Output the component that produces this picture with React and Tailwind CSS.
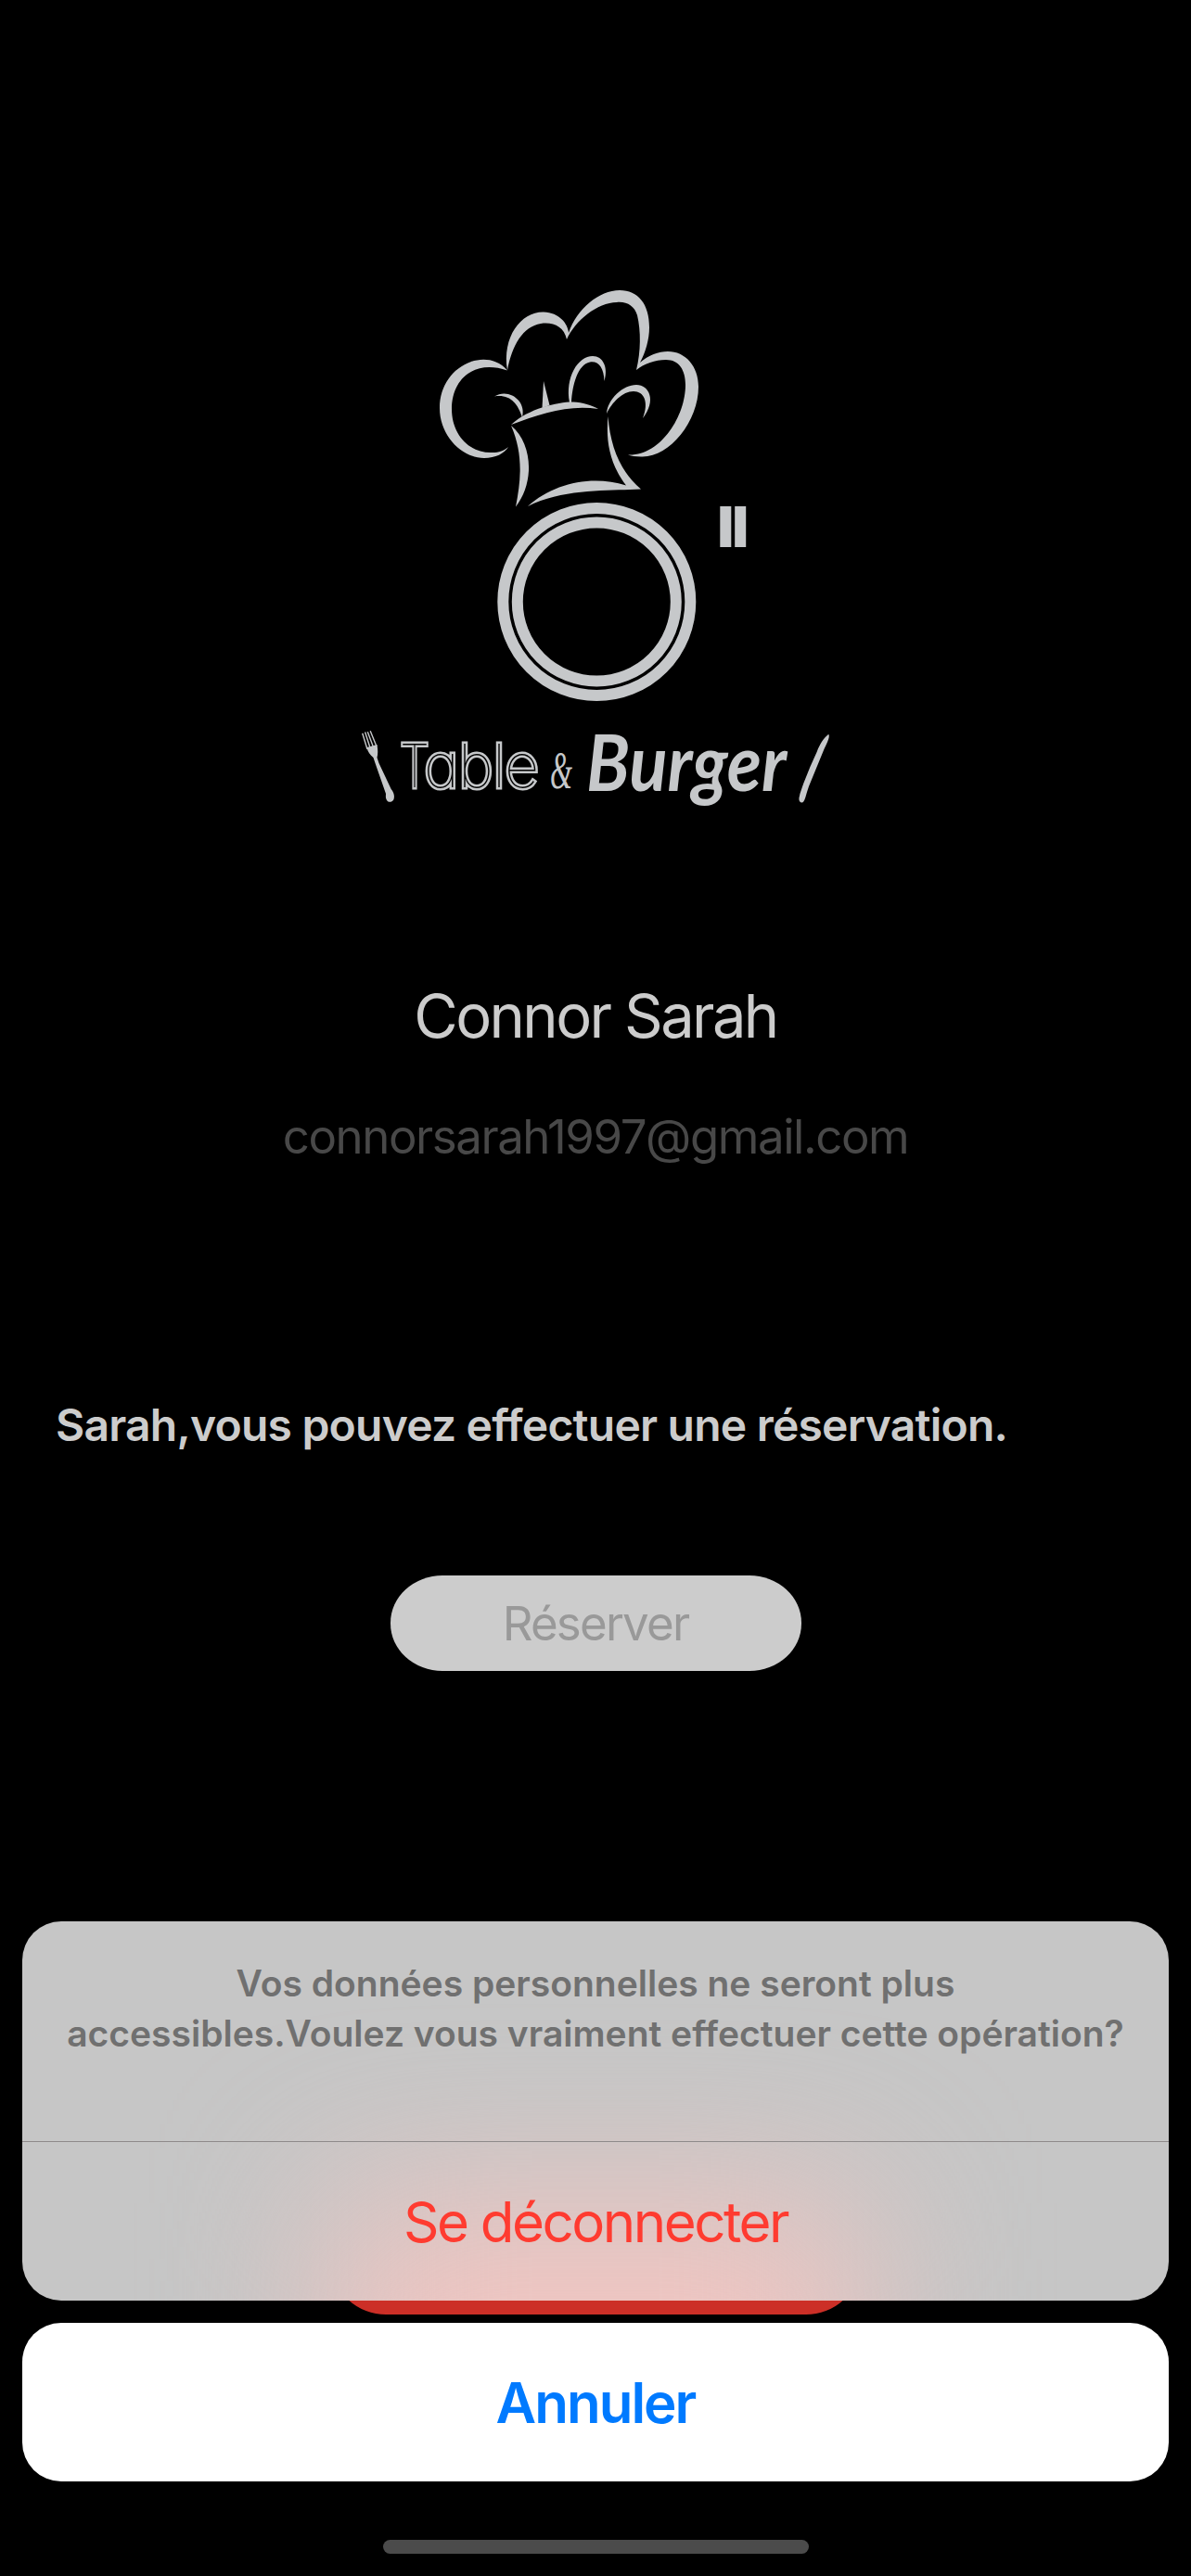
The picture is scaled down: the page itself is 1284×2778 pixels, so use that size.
const GREY = '#c6c8ca'

function Logo() {
  return (
    <svg viewBox="382 300 520 580" className="w-[520px] h-[580px]" fill={GREY}>
      {/* Chef hat: outer puffs */}
      <path d="M547 399.500C536 386 519 386 508 390C488 397 474 416 474 440C474 470 498 494 522 494C534 494 544 489 548 482C541 488 535 488 529 488C505 488 487 468 487 441C487 410 510 387 547 399.500Z" />
      <path d="M547 399.500C541 363 562 336 586 336.500C603 337 612 349 613 359C622 333 646 313 668 313C688 313 700 328 700 353C700 366 696 380 690 391C699 383 710 379 720 379C739 379 753 395 753 417C753 455 721 494 691 492.500C685 492.500 680 491.500 677 490.500C712 492 739 449 739 415C739 399 732 388 718 388C706 388 695 392 686 399C691 379 691 357 687 340C684 330 676 325 665 326C644 326 620 346 611 366C608 352 596 347 583 349C564 352 552 372 547 399.500Z" />
      {/* Inner folds */}
      <path d="M533 427.500C548 418 568 432 563 450C558 435 550 425 533 427.500Z" />
      <path d="M586 411L592.500 437L584.500 440Z" />
      <path d="M614 434C609 407 623 384 639 384C650 384 656 396 651.500 411C651 396 645 389 636 390.500C623 393 617 415 616 434Z" />
      <path d="M654 446C655 430 672 415 686 415C700 415 708 432 693 451C700 433 694 422 683 422C671 422 660 434 654 446Z" />
      {/* Band */}
      <path d="M551 458C570 440 604 433 618 433.500C628 434 638 437 645 441C613 436 583 446 551 458Z" />
      <path d="M551 459C575 479 576 521 556 546.500C562 516 564 489 551 459Z" />
      <path d="M655.500 449C658 482 669 509 691 527.500L679 528C649 529 605 528 569 546C597 521 638 512 675 523.500C657 500 653 475 655.500 449Z" />
      {/* Plate */}
      <g fill="none" stroke={GREY} strokeWidth="12">
        <circle cx="643.300" cy="649" r="101" />
        <circle cx="643.300" cy="649" r="85.500" />
      </g>
      <path d="M776.300 546h12v44h-12zM792.200 546h12v44h-12z" />
      {/* Fork */}
      <path d="M395.500 806L406.500 803C407.500 809 407.500 813 406.500 817L408.500 823L421.700 851C425 855 425.500 859 424.500 862C423 865.500 418 866 416.500 862C415.500 860 416 858 416 856L404.500 823L402.500 817C399 814 396.500 811 395.500 806Z" />
      <path d="M390.700 790.700L396 808M393.600 789.500L399.500 808M396.300 789.200L403 807M399.200 788.300L406 805" fill="none" stroke={GREY} strokeWidth="1.400" />
      {/* Knife */}
      <path d="M893.300 791.700C895.500 795 890 804 888 809L872 848C870.500 852 869.500 856 868.300 860C867 864 866 865.500 864.300 865.500C861.500 865 861 862 861.800 859C862.500 855 864.500 850 866.200 845L873.500 826.700L880.700 810.700C884 802 888 796 893.300 791.700Z" />
      {/* Wordmark */}
      <text
        y="848.500"
        fontFamily="Inter, sans-serif"
        fontSize="65"
        fontWeight="100"
        fill="#000"
        stroke={GREY}
        strokeWidth="5"
        paintOrder="stroke"
        style={{ fontFeatureSettings: '"cv11"' }}
      >
        <tspan x="431" textLength="32" lengthAdjust="spacingAndGlyphs">T</tspan>
        <tspan x="457 494 531 544">able</tspan>
      </text>
      <text x="593" y="850" fontFamily="Liberation Serif, serif" fontStyle="italic" fontSize="56" textLength="24" lengthAdjust="spacingAndGlyphs">&amp;</text>
      <text x="632" y="853" fontFamily="Lato, sans-serif" fontStyle="italic" fontWeight="700" fontSize="84" textLength="216" lengthAdjust="spacingAndGlyphs">Burger</text>
    </svg>
  )
}

export default function App() {
  return (
    <div className="relative w-[1284px] h-[2778px] overflow-hidden bg-black font-['Inter',sans-serif]">
      {/* Profile */}
      <main className="flex flex-col items-center pt-[300px]">
        <Logo />
        <h1 className="mt-[176px] h-20 leading-20 text-[65px] tracking-[-2.6px] text-[#cccccc]">Connor Sarah</h1>
        <p className="mt-[60px] h-[60px] leading-[60px] text-[51px] tracking-[-1.45px] text-[#484848]">connorsarah1997@gmail.com</p>
        <p className="mt-[251px] h-[60px] leading-[60px] w-full pl-[60px] text-[48px] tracking-[-0.78px] font-semibold text-[#cccccc]">
          Sarah,vous pouvez effectuer une réservation.
        </p>
        <button className="mt-[132px] w-[443px] h-[103px] rounded-[56px/51px] bg-[#cccccc] pt-0.5 text-[51px] tracking-[-1.8px] text-[#999999]">Réserver</button>
        <div className="mt-[591px] w-[565px] h-[103px] rounded-[56px/51px] bg-[#cc2f27]" />
      </main>

      {/* Action sheet */}
      <div className="absolute inset-x-6 top-[2072px] flex flex-col items-center">
        <section className="relative w-full h-[409px] rounded-[42px] overflow-hidden bg-[#c6c6c6] text-center">
          {/* Glow of the red button behind the sheet */}
          <div className="absolute left-1/2 -translate-x-1/2 top-[304px] w-[565px] h-[400px] bg-[#f2c5c1] blur-[90px]" />
          <p className="relative h-[237px] pt-10 text-[39px] leading-[54px] font-semibold text-[#707070]">
            Vos données personnelles ne seront plus
            <br />
            accessibles.Voulez vous vraiment effectuer cette opération?
          </p>
          <button className="relative w-full h-[172px] border-t border-[#8e8a8a] text-[60px] tracking-[-2.5px] text-[#ff3b30]">Se déconnecter</button>
        </section>
        <button className="mt-6 w-full h-[171px] rounded-[42px] bg-white text-[60px] tracking-[-2px] font-semibold text-[#007aff]">Annuler</button>
        <div className="mt-[63px] w-[459px] h-[15px] rounded-full bg-[#4b4b4b]" />
      </div>
    </div>
  )
}
